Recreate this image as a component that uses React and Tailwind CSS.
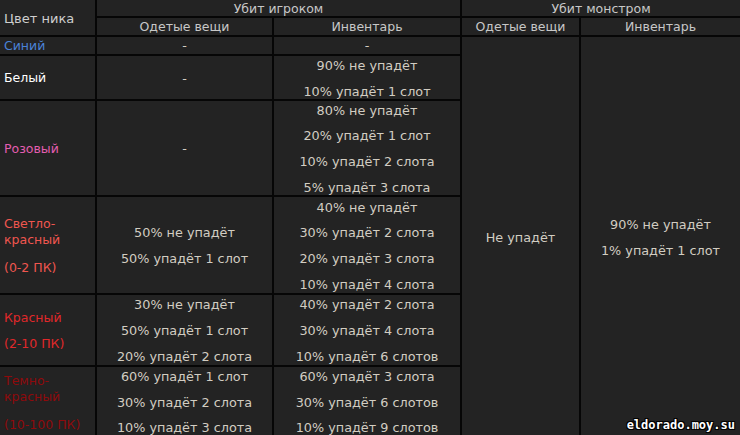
import React from 'react'

const cell = "bg-[#232323] flex flex-col items-center justify-center text-center pt-[2px]"
const label = "bg-[#232323] flex flex-col justify-center pl-1 pt-[2px]"
const txt = "text-[#d2cdc2] text-[12.8px]"
const head = "text-[#c8c8c8] leading-none"

function Lines({ items }) {
  return (
    <div className={`flex flex-col items-center leading-[25.7px] ${txt}`}>
      {items.map((t, i) => <span key={i} className="whitespace-nowrap">{t}</span>)}
    </div>
  )
}

export default function App() {
  return (
    <div className="relative w-[740px] h-[435px] overflow-hidden bg-black text-[12.5px] font-['DejaVu_Sans',Verdana,sans-serif]">
      <div className="grid grid-cols-[95px_175px_186px_117px_159px] grid-rows-[16px_17px_17px_43px_94px_96px_70px_69px] gap-[2px] bg-[#060606]">
        <div className={`${label} row-span-2 text-[#cfcfcf] text-[13px]`}>Цвет ника</div>
        <div className={`${cell} col-span-2 ${head}`}>Убит игроком</div>
        <div className={`${cell} col-span-2 ${head}`}>Убит монстром</div>

        <div className={`${cell} ${head}`}>Одетые вещи</div>
        <div className={`${cell} ${head}`}>Инвентарь</div>
        <div className={`${cell} ${head}`}>Одетые вещи</div>
        <div className={`${cell} ${head}`}>Инвентарь</div>

        {/* Синий */}
        <div className={`${label} text-[#4a82d6] leading-none`}>Синий</div>
        <div className={`${cell} ${txt} leading-none`}>-</div>
        <div className={`${cell} ${txt} leading-none`}>-</div>
        <div className={`${cell} row-span-6`}>
          <span className={txt}>Не упадёт</span>
        </div>
        <div className={`${cell} row-span-6`}>
          <Lines items={["90% не упадёт", "1% упадёт 1 слот"]} />
        </div>

        {/* Белый */}
        <div className={`${label} text-white`}>Белый</div>
        <div className={`${cell} ${txt}`}>-</div>
        <div className={cell}><Lines items={["90% не упадёт", "10% упадёт 1 слот"]} /></div>

        {/* Розовый */}
        <div className={`${label} text-[#e45db0]`}>Розовый</div>
        <div className={`${cell} ${txt}`}>-</div>
        <div className={cell}>
          <Lines items={["80% не упадёт", "20% упадёт 1 слот", "10% упадёт 2 слота", "5% упадёт 3 слота"]} />
        </div>

        {/* Светло-красный */}
        <div className={`${label} text-[#f0564f] leading-4`}>
          <span>Светло-</span>
          <span>красный</span>
          <span className="mt-3">(0-2 ПК)</span>
        </div>
        <div className={cell}><Lines items={["50% не упадёт", "50% упадёт 1 слот"]} /></div>
        <div className={cell}>
          <Lines items={["40% не упадёт", "30% упадёт 2 слота", "20% упадёт 3 слота", "10% упадёт 4 слота"]} />
        </div>

        {/* Красный */}
        <div className={`${label} text-[#e0282a] leading-[26px]`}>
          <span>Красный</span>
          <span>(2-10 ПК)</span>
        </div>
        <div className={cell}>
          <Lines items={["30% не упадёт", "50% упадёт 1 слот", "20% упадёт 2 слота"]} />
        </div>
        <div className={cell}>
          <Lines items={["40% упадёт 2 слота", "30% упадёт 4 слота", "10% упадёт 6 слотов"]} />
        </div>

        {/* Темно-красный */}
        <div className={`${label} text-[#8e0a0c] leading-4`}>
          <span>Темно-</span>
          <span>красный</span>
          <span className="mt-3 whitespace-nowrap">(10-100 ПК)</span>
        </div>
        <div className={cell}>
          <Lines items={["60% упадёт 1 слот", "30% упадёт 2 слота", "10% упадёт 3 слота"]} />
        </div>
        <div className={cell}>
          <Lines items={["60% упадёт 3 слота", "30% упадёт 6 слотов", "10% упадёт 9 слотов"]} />
        </div>
      </div>

      <div className="absolute right-[5px] bottom-[4px] font-['DejaVu_Sans_Mono',monospace] font-bold text-[12px] leading-none text-white [text-shadow:1px_1px_0_#000,-1px_-1px_0_#000,1px_-1px_0_#000,-1px_1px_0_#000]">
        eldorado.moy.su
      </div>
    </div>
  )
}
